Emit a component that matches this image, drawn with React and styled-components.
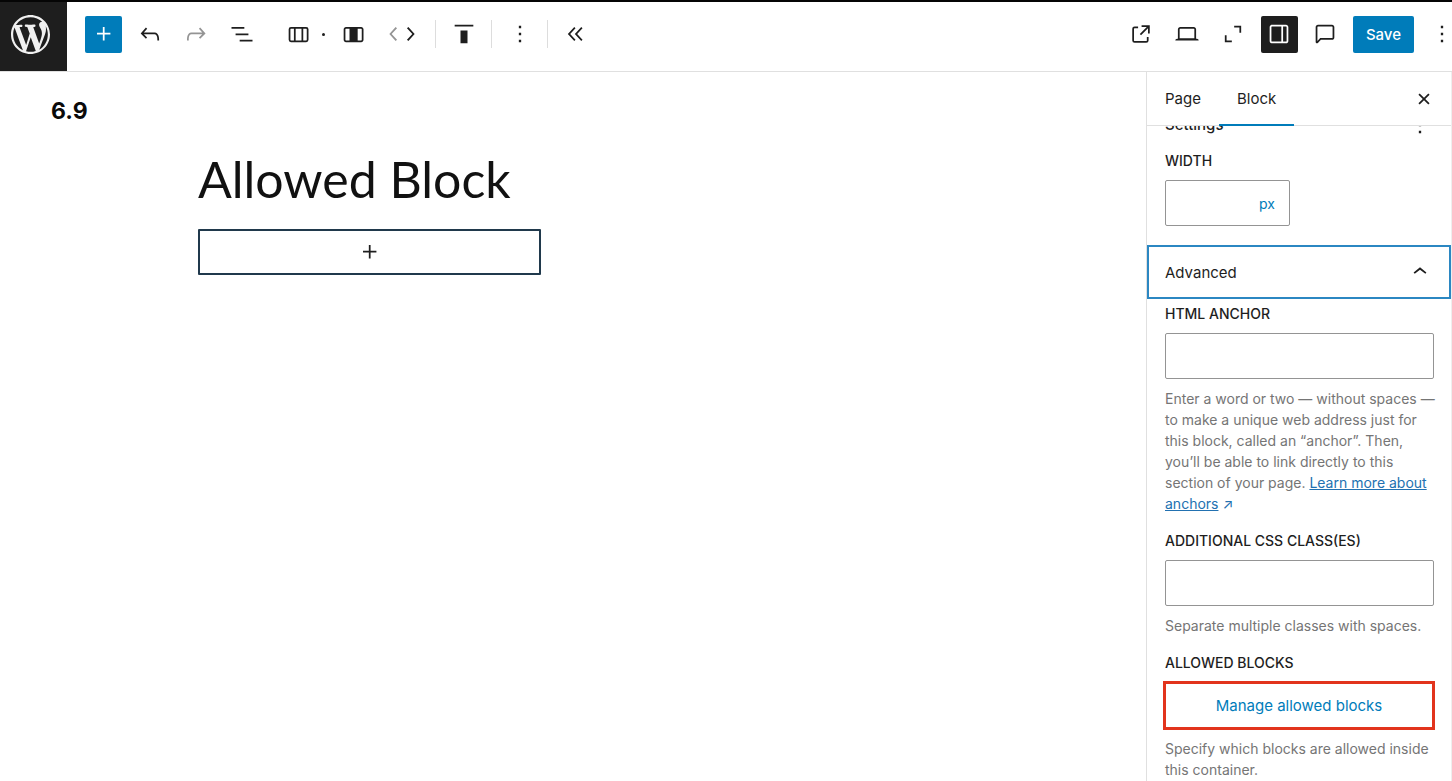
import React from "react";
import styled, { createGlobalStyle } from "styled-components";

const INK = "#1e1e1e";
const BLUE = "#007cba";
const LINE = "#e0e0e0";

const GlobalStyle = createGlobalStyle`
  *, *::before, *::after { box-sizing: border-box; }
  body {
    margin: 0;
    background: #fff;
    color: ${INK};
    font-family: Inter, "Liberation Sans", sans-serif;
    font-size: 14px;
  }
  button, input { font: inherit; color: inherit; }
`;

const paths = {
  wordpress:
    "M20 10c0-5.51-4.49-10-10-10C4.48 0 0 4.49 0 10c0 5.52 4.48 10 10 10 5.51 0 10-4.48 10-10zM7.78 15.37L4.37 6.22c.55-.02 1.17-.08 1.17-.08.5-.06.44-1.13-.06-1.11 0 0-1.45.11-2.37.11-.18 0-.37 0-.58-.01C4.12 2.69 6.87 1.11 10 1.11c2.33 0 4.45.87 6.05 2.34-.68-.11-1.65.39-1.65 1.58 0 .74.45 1.36.9 2.1.35.61.55 1.36.55 2.46 0 1.49-1.4 5-1.4 5l-3.03-8.37c.54-.02.82-.17.82-.17.5-.05.44-1.25-.06-1.22 0 0-1.44.12-2.38.12-.87 0-2.33-.12-2.33-.12-.5-.03-.56 1.2-.06 1.22l.92.08 1.26 3.41zM17.41 10c.24-.64.74-1.87.43-4.25.7 1.29 1.05 2.71 1.05 4.25 0 3.29-1.73 6.24-4.4 7.78.97-2.59 1.94-5.2 2.92-7.78zM6.1 18.09C3.12 16.65 1.11 13.53 1.11 10c0-1.3.23-2.48.72-3.59C3.25 10.3 4.67 14.2 6.1 18.09zm4.03-6.63l2.58 6.98c-.86.29-1.76.45-2.71.45-.79 0-1.57-.11-2.29-.33.81-2.38 1.62-4.74 2.42-7.1z",
  plus: "M11 12.5V17.5H12.5V12.5H17.5V11H12.5V6H11V11H6V12.5H11Z",
  undo: "M18.3 11.7c-.6-.6-1.4-.9-2.3-.9H6.7l2.9-3.3-1.1-1-4.5 5L8.5 16l1-1-2.7-2.7H16c.5 0 .9.2 1.3.5 1 1 1 3.4 1 4.5v.3h1.5v-.2c0-1.5 0-4.3-1.5-5.7z",
  redo: "M15.6 6.5l-1.1 1 2.9 3.3H8c-.9 0-1.7.3-2.3.9-1.4 1.5-1.4 4.2-1.4 5.6v.2h1.5v-.3c0-1.1 0-3.5 1-4.5.3-.3.7-.5 1.3-.5h9.2L14.5 15l1.1 1.1 4.6-4.6-4.6-5z",
  listView: "M3 6h11v1.5H3V6Zm3.5 5.5h11V13h-11v-1.5ZM21 17H10v1.5h11V17Z",
  columns:
    "M15 7.5h-5v10h5v-10Zm1.5 0v10H19a.5.5 0 0 0 .5-.5V8a.5.5 0 0 0-.5-.5h-2.5ZM6 7.5h2.5v10H6a.5.5 0 0 1-.5-.5V8a.5.5 0 0 1 .5-.5ZM6 6h13a2 2 0 0 1 2 2v9a2 2 0 0 1-2 2H6a2 2 0 0 1-2-2V8a2 2 0 0 1 2-2Z",
  column:
    "M19 6H6c-1.1 0-2 .9-2 2v9c0 1.1.9 2 2 2h13c1.1 0 2-.9 2-2V8c0-1.1-.9-2-2-2zM6 17.5c-.3 0-.5-.2-.5-.5V8c0-.3.2-.5.5-.5h3v10H6zm13.5-.5c0 .3-.2.5-.5.5h-3v-10h3c.3 0 .5.2.5.5v9z",
  chevronLeft: "M14.6 7l-1.2-1L8 12l5.4 6 1.2-1-4.6-5z",
  chevronRight: "M10.6 6L9.4 7l4.6 5-4.6 5 1.2 1 5.4-6z",
  chevronUp: "M6.5 12.4L12 8l5.5 4.4-.9 1.2L12 10l-4.5 3.6-1-1.2z",
  alignTop: "M9 20h6V9H9v11zM4 4v1.5h16V4H4z",
  more: "M13 19h-2v-2h2v2zm0-6h-2v-2h2v2zm0-6h-2V5h2v2z",
  collapse:
    "M11.6 7l-1.1-1L5 12l5.5 6 1.1-1L7 12l4.6-5zm6 0l-1.1-1-5.5 6 5.5 6 1.1-1-4.6-5 4.6-5z",
  external:
    "M19.5 4.5h-7V6h4.44l-5.97 5.97 1.06 1.06L18 7.06v4.44h1.5v-7Zm-13 1a2 2 0 0 0-2 2v10a2 2 0 0 0 2 2h10a2 2 0 0 0 2-2v-3H17v3a.5.5 0 0 1-.5.5h-10a.5.5 0 0 1-.5-.5v-10a.5.5 0 0 1 .5-.5h3V5.5h-3Z",
  desktop:
    "M20.5 16h-.7V8c0-1.1-.9-2-2-2H6.2c-1.1 0-2 .9-2 2v8h-.7c-.8 0-1.5.7-1.5 1.5h20c0-.8-.7-1.5-1.5-1.5zM5.7 8c0-.3.2-.5.5-.5h11.6c.3 0 .5.2.5.5v7.6H5.7V8z",
  zoomOut: "M13 5h6v6h-1.5V6.5H13zM5 13h1.5v4.5H11V19H5z",
  drawer:
    "M18 4H6c-1.1 0-2 .9-2 2v12c0 1.1.9 2 2 2h12c1.1 0 2-.9 2-2V6c0-1.1-.9-2-2-2zm-4 14.5H6c-.3 0-.5-.2-.5-.5V6c0-.3.2-.5.5-.5h8v13zm4.5-.5c0 .3-.2.5-.5.5h-2.5v-13H18c.3 0 .5.2.5.5v12z",
  comment:
    "M18 4H6c-1.1 0-2 .9-2 2v12.9c0 .6.5 1.1 1.1 1.1.3 0 .5-.1.8-.3L8.5 17H18c1.1 0 2-.9 2-2V6c0-1.1-.9-2-2-2zm.5 11c0 .3-.2.5-.5.5H7.9l-2.4 2.4V6c0-.3.2-.5.5-.5h12c.3 0 .5.2.5.5v9z",
  close:
    "M12 13.06l3.712 3.713 1.061-1.06L13.061 12l3.712-3.712-1.06-1.06L12 10.938 8.288 7.227l-1.061 1.06L10.939 12l-3.712 3.712 1.06 1.061L12 13.061z",
};

const Svg = styled.svg`
  display: block;
  flex: none;
  fill: currentColor;
`;

function Icon({ name, size = 28, box = "0 0 24 24" }) {
  return (
    <Svg width={size} height={size} viewBox={box} aria-hidden="true">
      <path d={paths[name]} fillRule="evenodd" />
    </Svg>
  );
}

const Screen = styled.div`
  display: flex;
  flex-direction: column;
  height: 100vh;
  overflow: hidden;
  border-top: 2px solid #050505;
`;

const Header = styled.header`
  display: flex;
  align-items: stretch;
  flex: none;
  height: 70px;
  border-bottom: 1px solid ${LINE};
`;

const SiteHub = styled.button`
  display: flex;
  align-items: center;
  flex: none;
  width: 67px;
  padding: 0 0 4px 11px;
  border: 0;
  background: ${INK};
  color: #f0f0f0;
`;

const Tools = styled.div`
  display: flex;
  align-items: center;
  gap: 9px;
  padding-bottom: 5px;
`;

const DocumentTools = styled(Tools)`
  padding-left: 18px;
`;

const BlockTools = styled(Tools)`
  padding-left: 19px;
`;

const SettingsTools = styled(Tools)`
  margin: 0 -8px 0 auto;
`;

const IconButton = styled.button`
  display: flex;
  align-items: center;
  justify-content: center;
  flex: none;
  width: ${(p) => (p.$narrow ? 16 : 37)}px;
  height: 37px;
  padding: 0;
  border: 0;
  border-radius: 2px;
  background: ${(p) => p.$fill || "transparent"};
  color: ${(p) => p.$color || INK};
`;

const Cluster = styled.div`
  display: flex;
  align-items: center;
`;

const CrumbDot = styled.span`
  display: flex;
  justify-content: center;
  width: 18px;
  padding-right: 4px;

  &::before {
    content: "";
    width: 3px;
    height: 3px;
    border-radius: 50%;
    background: ${INK};
  }
`;

const Movers = styled(Cluster)`
  margin: 0 8px 0 6px;
`;

const Divider = styled.span`
  width: 1px;
  height: 28px;
  background: #ddd;
`;

const SaveButton = styled.button`
  height: 37px;
  padding: 0 13px;
  border: 0;
  border-radius: 2px;
  background: ${BLUE};
  color: #fff;
  font-size: 15px;
  font-weight: 500;
`;

const Body = styled.div`
  display: flex;
  flex: 1;
  min-height: 0;
`;

const Canvas = styled.main`
  flex: 1;
  min-width: 0;
  padding-top: 24px;
`;

const Version = styled.p`
  margin: 0 0 0 51px;
  font-size: 23px;
  line-height: 30px;
  font-weight: 700;
  color: #0a0a0a;
`;

const Content = styled.article`
  max-width: 750px;
  margin: 20px auto 0;
`;

const Title = styled.h1`
  margin: 0;
  font-family: Lato, sans-serif;
  font-size: 50px;
  line-height: 66px;
  font-weight: 400;
  color: #111;
`;

const Columns = styled.div`
  display: grid;
  grid-template-columns: 1fr 1fr;
  gap: 64px;
  margin-top: 17px;
`;

const Appender = styled.button`
  display: flex;
  align-items: center;
  justify-content: center;
  height: 46px;
  padding: 0;
  border: 2px solid #20394c;
  border-radius: 1px;
  background: #fff;
`;

const Sidebar = styled.aside`
  display: flex;
  flex-direction: column;
  flex: none;
  width: 306px;
  border-left: 1px solid ${LINE};
  border-right: 1px solid #eee;
`;

const TabBar = styled.div`
  display: flex;
  flex: none;
  height: 54px;
  border-bottom: 1px solid ${LINE};
`;

const Tab = styled.button`
  height: 54px;
  padding: 0 18px;
  border: 0;
  border-bottom: 2px solid ${(p) => (p.$active ? BLUE : "transparent")};
  background: none;
  font-size: 15px;
`;

const CloseButton = styled(IconButton)`
  margin: 8px 9px 0 auto;
`;

const Scroller = styled.div`
  flex: 1;
  min-height: 0;
  overflow: hidden;
`;

const Section = styled.section`
  padding: 0 17px 0 18px;
`;

const SettingsHead = styled.div`
  display: flex;
  align-items: center;
  justify-content: space-between;
  height: 28px;
  margin: -15px 0 13px;
`;

const SectionTitle = styled.h2`
  margin: 0;
  font-size: 15px;
  line-height: 20px;
  font-weight: 500;
`;

const SlimButton = styled(IconButton)`
  width: 28px;
  height: 28px;
`;

const Label = styled.label`
  display: block;
  margin-bottom: 10px;
  font-size: 14px;
  line-height: 18px;
  font-weight: 500;
  text-transform: uppercase;
`;

const Field = styled.div`
  margin-bottom: ${(p) => p.$gap || 0}px;
`;

const TextInput = styled.input`
  display: block;
  width: 100%;
  height: 46px;
  padding: 0 12px;
  border: 1px solid #949494;
  border-radius: 2px;
  background: #fff;
`;

const UnitBox = styled.div`
  display: flex;
  align-items: center;
  width: 125px;
  height: 46px;
  border: 1px solid #949494;
  border-radius: 2px;
`;

const UnitInput = styled.input`
  flex: 1;
  min-width: 0;
  height: 100%;
  padding: 0 8px;
  border: 0;
  background: transparent;
`;

const UnitButton = styled.button`
  padding: 0 14px 0 0;
  border: 0;
  background: none;
  color: ${BLUE};
  font-size: 14px;
`;

const PanelToggle = styled.button`
  display: flex;
  align-items: center;
  justify-content: space-between;
  width: 100%;
  height: 54px;
  margin: 19px 0 6px;
  padding: 0 15px 0 16px;
  border: 2px solid #2b87c2;
  background: #fff;
  font-size: 15px;
`;

const Help = styled.p`
  margin: 9px -6px 0 0;
  color: #757575;
  font-size: 14px;
  line-height: 21px;
`;

const Link = styled.a`
  color: #2271b1;
  text-decoration: none;

  span { text-decoration: underline; }
`;

const ManageButton = styled.button`
  display: block;
  width: calc(100% + 3px);
  height: 49px;
  margin: -1px -1px -1px -2px;
  border: 3px solid #e2341d;
  background: #fff;
  color: ${BLUE};
  font-size: 15px;
`;

export default function App() {
  return (
    <Screen>
      <GlobalStyle />
      <Header>
        <SiteHub aria-label="Open navigation">
          <Icon name="wordpress" size={39} box="0 0 20 20" />
        </SiteHub>
        <DocumentTools>
          <IconButton aria-label="Block inserter" $fill={BLUE} $color="#fff">
            <Icon name="plus" />
          </IconButton>
          <IconButton aria-label="Undo"><Icon name="undo" /></IconButton>
          <IconButton aria-label="Redo" $color="#949494"><Icon name="redo" /></IconButton>
          <IconButton aria-label="Document overview"><Icon name="listView" /></IconButton>
        </DocumentTools>
        <BlockTools>
          <Cluster>
            <IconButton aria-label="Select parent block: Columns"><Icon name="columns" /></IconButton>
            <CrumbDot />
            <IconButton aria-label="Column"><Icon name="column" /></IconButton>
          </Cluster>
          <Movers>
            <IconButton aria-label="Move left" $narrow $color="#949494"><Icon name="chevronLeft" /></IconButton>
            <IconButton aria-label="Move right" $narrow><Icon name="chevronRight" /></IconButton>
          </Movers>
          <Divider />
          <IconButton aria-label="Align top"><Icon name="alignTop" /></IconButton>
          <Divider />
          <IconButton aria-label="Options"><Icon name="more" /></IconButton>
          <Divider />
          <IconButton aria-label="Hide block tools"><Icon name="collapse" /></IconButton>
        </BlockTools>
        <SettingsTools>
          <IconButton aria-label="View page"><Icon name="external" /></IconButton>
          <IconButton aria-label="View"><Icon name="desktop" /></IconButton>
          <IconButton aria-label="Zoom out"><Icon name="zoomOut" /></IconButton>
          <IconButton aria-label="Settings" $fill={INK} $color="#fff"><Icon name="drawer" /></IconButton>
          <IconButton aria-label="Notes"><Icon name="comment" /></IconButton>
          <SaveButton>Save</SaveButton>
          <IconButton aria-label="More"><Icon name="more" /></IconButton>
        </SettingsTools>
      </Header>
      <Body>
        <Canvas>
          <Version>6.9</Version>
          <Content>
            <Title>Allowed Block</Title>
            <Columns>
              <Appender aria-label="Add block"><Icon name="plus" /></Appender>
            </Columns>
          </Content>
        </Canvas>
        <Sidebar>
          <TabBar role="tablist">
            <Tab role="tab" aria-selected="false">Page</Tab>
            <Tab role="tab" aria-selected="true" $active>Block</Tab>
            <CloseButton aria-label="Close settings"><Icon name="close" /></CloseButton>
          </TabBar>
          <Scroller>
            <Section>
              <SettingsHead>
                <SectionTitle>Settings</SectionTitle>
                <SlimButton aria-label="Settings options"><Icon name="more" /></SlimButton>
              </SettingsHead>
              <Label htmlFor="width">Width</Label>
              <UnitBox>
                <UnitInput id="width" />
                <UnitButton>px</UnitButton>
              </UnitBox>
            </Section>
            <PanelToggle aria-expanded="true">
              Advanced
              <Icon name="chevronUp" />
            </PanelToggle>
            <Section>
              <Field $gap={18}>
                <Label htmlFor="anchor">HTML anchor</Label>
                <TextInput id="anchor" />
                <Help>
                  Enter a word or two — without spaces — to make a unique web address just for this
                  block, called an “anchor”. Then, you’ll be able to link directly to this section
                  of your page. <Link href="#anchors"><span>Learn more about anchors</span> ↗</Link>
                </Help>
              </Field>
              <Field $gap={18}>
                <Label htmlFor="classes">Additional CSS class(es)</Label>
                <TextInput id="classes" />
                <Help>Separate multiple classes with spaces.</Help>
              </Field>
              <Field>
                <Label htmlFor="manage">Allowed blocks</Label>
                <ManageButton id="manage">Manage allowed blocks</ManageButton>
                <Help>Specify which blocks are allowed inside this container.</Help>
              </Field>
            </Section>
          </Scroller>
        </Sidebar>
      </Body>
    </Screen>
  );
}
